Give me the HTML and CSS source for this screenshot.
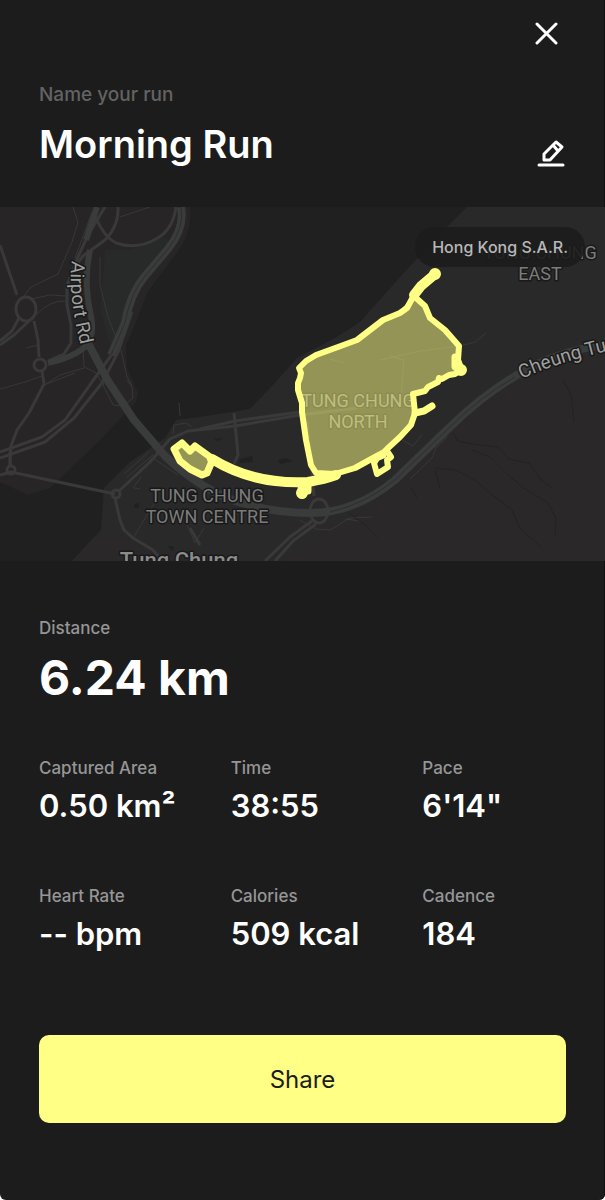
FILE: index.html
```html
<!DOCTYPE html>
<html lang="en">
<head>
    <meta charset="UTF-8">
    <meta name="viewport" content="width=device-width, initial-scale=1.0">
    <title>Morning Run</title>
    <link rel="stylesheet" href="styles.css">
</head>
<body>
    <main class="run">
        <header class="header">
            <button class="icon-button close" type="button" aria-label="Close">
                <svg width="24" height="24" viewBox="0 0 24 24"><path d="M2 2L21 21M21 2L2 21"/></svg>
            </button>
            <label class="name-label" for="runName">Name your run</label>
            <div class="name-row">
                <input class="name" type="text" id="runName" value="Morning Run">
                <button class="icon-button edit" type="button" aria-label="Edit name">
                    <svg width="28" height="28" viewBox="0 0 28 28"><path d="M2 26H26M7 21V15L19 3L25 8L13 21ZM16 6L21 12"/></svg>
                </button>
            </div>
        </header>

        <section class="map">
            <svg class="map-view" viewBox="0 207 605 354" preserveAspectRatio="xMidYMid slice" role="img" aria-label="Route map">
                <rect class="water" x="0" y="207" width="605" height="354"/>
                <!-- land -->
                <path class="shore" d="M0 207H190Q193 232 176 254L148 291L137 320L126 345L127 368L138 393L136 402L100 440L67 472L50 488L28 495L0 482Z"/>
                <path class="land" d="M467 207L448 226L400 277L360 322L335 338L297 358L273 385L250 409L200 417L176 420L165 438L130 462L104 488L101 530L72 561H605V207Z"/>
                <path class="hill" d="M605 355L545 371L500 390L450 431L405 478L350 520L320 535L280 561H605ZM72 561L94 537L112 530L135 542L155 561Z"/>
                <path class="park" d="M105 250L130 250L165 237L172 245L137 290L124 330L112 352L100 310Z"/>
                <path class="spot" d="M278 460L286 458L293 461L280 464ZM240 459L252 456L253 462L239 463ZM214 439L223 438L218 441ZM134 504L139 503L139 508L134 508ZM167 546L174 546L173 551Z"/>
                <!-- paths -->
                <g class="lane">
                    <path d="M73 207L78 222L72 242L58 274L31 287L24 296"/>
                    <path d="M31 299L50 295L66 296M36 315Q50 300 66 301"/>
                    <path d="M100 257V285L108 317L121 350L127 377L132 386"/>
                    <path d="M120 217L150 207M83 347L84 367L95 372L104 385M84 368L60 375L46 384M26 348L38 345"/>
                    <path d="M92 212L75 258M44 385L75 373M0 389L25 382L42 376"/>
                    <path d="M102 383L113 405L123 406L133 398L132 387L127 380"/>
                    <path d="M179 403L180 416M173 434L174 425L186 423L192 427M133 488L141 477M124 474L149 452M126 478L153 455M134 488L140 489M133 538L155 502"/>
                    <path d="M380 360L420 351L460 346L475 342L486 333M401 400L404 358M330 359L345 363M390 355L402 360"/>
                    <path d="M449 428L446 438L436 448L432 458L410 479M402 440L413 446L422 435"/>
                    <path d="M154 459L178 475M187 525L195 543L204 528M300 520L316 529L330 530L350 518L372 517M345 519L360 521"/>
                </g>
                <g class="trail">
                    <path d="M453 433L458 441L472 444L498 447L508 459L529 463L540 479L552 488"/>
                    <path d="M472 450L490 457L510 477L525 489L547 502L556 518L555 536M435 468L455 470L475 480L490 493L512 510L520 529L541 547"/>
                    <path d="M563 380L571 395L574 422M411 487L417 498M435 470L440 488M345 510L365 525L378 538"/>
                </g>
                <!-- roads -->
                <g class="road">
                    <path d="M0 245L17 295"/>
                    <ellipse cx="26" cy="309" rx="10" ry="12"/>
                    <path d="M19 318L12 331L0 341M30 320L14 335L0 345M34 321L38 340L39 357"/>
                    <circle cx="40" cy="365" r="6"/>
                    <path d="M42 371L44 384L29 413L17 430L11 446L10 465"/>
                    <path d="M105 207L88 235L77 259L67 286L67 305L71 325L71 343L64 354L48 361"/>
                    <path d="M96 218Q104 237 116 243Q137 250 156 239Q173 230 176 207"/>
                    <path d="M118 207Q119 226 105 240L83 256L77 264"/>
                    <path d="M128 310L115 350L92 382L65 420L42 437L0 452M132 312L118 352L102 383L74 418L45 442L0 458"/>
                    <path d="M10 452V466"/>
                    <circle cx="11" cy="470" r="4"/>
                    <path d="M0 475L11 472L115 494"/>
                    <circle cx="116" cy="494" r="4"/>
                    <path d="M119 491L150 462L170 439L188 431L235 426L300 415L350 409L415 398"/>
                    <path d="M115 498L120 520L124 530L133 538L153 550L162 561"/>
                    <path d="M307 421L314 496"/>
                    <path d="M200 429L235 421L300 412M234 413L238 455L234 464"/>
                    <ellipse cx="319" cy="511" rx="9" ry="12"/>
                    <path d="M312 521L290 537L265 561M316 524L293 541L275 561"/>
                    <path d="M190 528L200 545"/>
                </g>
                <g class="highway">
                    <path d="M97 207L86 240M90 250Q83 281 91 316Q95 336 85 347Q72 358 48 363"/>
                    <path class="coast" d="M181 207Q185 228 168 249L145 276Q130 294 125 323L111 355"/>
                    <path class="main" d="M88 343L108 381L134 420L165 456Q189 479 218 494Q260 513 310 513Q355 513 395 480L450 427Q490 388 535 365Q570 349 605 345"/>
                    <path class="divider" d="M181 207Q185 228 168 249L145 276Q130 294 125 323L111 355M330 512Q365 504 395 480L450 427Q480 397 515 377"/>
                </g>
                <!-- place names -->
                <g class="place">
                    <text x="540" y="259">TUNG CHUNG</text>
                    <text x="540" y="280">EAST</text>
                    <text x="358" y="407">TUNG CHUNG</text>
                    <text x="358" y="428">NORTH</text>
                    <text x="207" y="502">TUNG CHUNG</text>
                    <text x="207" y="523">TOWN CENTRE</text>
                </g>
                <path id="airportRoad" class="guide" d="M72 261Q67 295 82 350"/>
                <path id="cheungTung" class="guide" d="M522 379Q560 360 640 344"/>
                <text class="street"><textPath href="#airportRoad">Airport Rd</textPath></text>
                <text class="street"><textPath href="#cheungTung">Cheung Tung Rd</textPath></text>
                <text class="town" x="179" y="568">Tung Chung</text>
                <!-- captured area and route -->
                <path class="area" d="M413 297L400 310L383 319L357 340L316 355L306 361L299 368L301 375L297 384L302 399L302 412L306 440L311 465L316 473L345 472L375 457L392 445L411 425L415 413L413 394L450 374L463 369L458 345L430 316Z"/>
                <path class="area" d="M174 449L182 443L190 451L195 446L213 459L207 473L202 475L190 469L180 461Z"/>
                <g class="route">
                    <path d="M413 297L407 308L400 313L383 320L357 340L338 347L316 355L306 361L299 368L301 373L300 378L298 383L298 390L302 403L302 412L306 440L311 465L316 473L335 474L355 468L375 457L384 452L387 449L400 437L411 425L415 413L413 394L425 391L428 387L438 382L439 378L442 379L449 375L455 374L462 370L458 360L459 346L445 330L430 318L425 306L415 297"/>
                    <path class="block" d="M415 413L424 411L432 406"/>
                    <path class="block" d="M174 449L182 443L190 451L195 446L213 459L207 473L202 475L190 469L180 461Z"/>
                    <path class="block" d="M374 459L383 455"/>
                    <path d="M376 460L374 463L377 474L388 467L387 460L391 457L387 451"/>
                    <path class="block" d="M455 357L455 367L461 370M308 483L308 491"/>
                    <path class="end" d="M302 493V493M435 274V274M461 370V370"/>
                    <path class="wide" d="M414 295L421 286L434 275M302 494L303 486"/>
                    <path class="wide" d="M212 459Q254 485 308 482Q325 479 336 475"/>
                </g>
            </svg>
            <span class="region">Hong Kong S.A.R.</span>
        </section>

        <section class="stats">
            <dl class="distance">
                <dt>Distance</dt>
                <dd>6.24 km</dd>
            </dl>
            <dl class="grid">
                <div><dt>Captured Area</dt><dd>0.50 km²</dd></div>
                <div><dt>Time</dt><dd>38:55</dd></div>
                <div><dt>Pace</dt><dd>6'14"</dd></div>
                <div><dt>Heart Rate</dt><dd>-- bpm</dd></div>
                <div><dt>Calories</dt><dd>509 kcal</dd></div>
                <div><dt>Cadence</dt><dd>184</dd></div>
            </dl>
            <button class="share" type="button">Share</button>
        </section>
    </main>
</body>
</html>
```
FILE: styles.css
```css
* {
    box-sizing: border-box;
}

body {
    margin: 0;
    background-color: #fff;
    font-family: Inter, "Liberation Sans", sans-serif;
    color: #fff;
}

.run {
    display: flex;
    flex-direction: column;
    min-height: 100vh;
    background-color: #1c1c1c;
    box-shadow: inset -1px 0 #101010;
    border-radius: 0 0 6px 6px;
}

/* header */
.header {
    display: flex;
    flex-direction: column;
    padding: 16px 40px 36px 39px;
}

.icon-button {
    display: flex;
    padding: 6px;
    border: none;
    background: none;
    cursor: pointer;
}

.icon-button path {
    fill: none;
    stroke: #fff;
    stroke-width: 3;
    stroke-linecap: round;
    stroke-linejoin: round;
}

.close {
    align-self: flex-end;
}

.name-label {
    margin-top: 31px;
    font-size: 19px;
    font-weight: 500;
    line-height: 24px;
    color: #636363;
}

.name-row {
    display: flex;
    align-items: flex-end;
    margin-top: 12px;
}

.name {
    flex: 1;
    min-width: 0;
    height: 52px;
    padding: 0 0 2px;
    border: none;
    outline: none;
    background: none;
    font-family: inherit;
    font-size: 38px;
    font-weight: 600;
    color: #fff;
}

.edit {
    margin-right: -6px;
    padding-bottom: 4px;
}

/* map */
.map {
    position: relative;
    overflow: hidden;
}

.map-view {
    display: block;
    width: 100%;
    height: auto;
}

.region {
    position: absolute;
    top: 20px;
    right: 20px;
    padding: 0 17px;
    border-radius: 20px;
    background-color: rgba(28, 28, 28, 0.9);
    font-size: 16px;
    font-weight: 500;
    line-height: 40px;
    color: #b8b8b8;
}

.water {
    fill: #202020;
}

.shore {
    fill: #272526;
}

.land {
    fill: #292929;
}

.hill {
    fill: #2a2829;
}

.park {
    fill: #282929;
}

.spot {
    fill: #202121;
}

.lane, .trail, .road, .highway, .guide {
    fill: none;
    stroke-linejoin: round;
}

.lane {
    stroke: #383838;
    stroke-width: 1;
}

.trail {
    stroke: #232323;
    stroke-width: 1;
}

.road {
    stroke: #393939;
    stroke-width: 3;
}

.highway {
    stroke: #3a3b3b;
    stroke-width: 6;
}

.highway .coast {
    stroke-width: 8;
}

.highway .main {
    stroke-width: 8;
}

.highway .divider {
    stroke: #2c2d2d;
    stroke-width: 1;
}

.place, .street, .town {
    font-family: Roboto, sans-serif;
    font-size: 18px;
    fill: #7c7c7c;
    stroke: #191919;
    stroke-width: 3;
    stroke-linejoin: round;
    paint-order: stroke;
}

.place, .town {
    text-anchor: middle;
}

.street {
    font-size: 19px;
    fill: #a0a0a0;
}

.town {
    font-size: 22px;
    font-weight: 500;
    fill: #8c8c8c;
}

.area {
    fill: rgba(255, 255, 133, 0.5);
}

.route {
    fill: none;
    stroke: #ffff85;
    stroke-width: 6;
    stroke-linecap: round;
    stroke-linejoin: round;
}

.route .block {
    stroke-width: 7;
}

.route .wide {
    stroke-width: 10;
}

.route .end {
    stroke-width: 12;
}

/* stats */
.stats {
    display: flex;
    flex-direction: column;
    padding: 55px 39px 76px;
}

dl, dd {
    margin: 0;
}

dt {
    font-size: 17px;
    font-weight: 500;
    line-height: 24px;
    color: #969696;
}

dd {
    margin-top: 6px;
    font-size: 31px;
    font-weight: 600;
    line-height: 40px;
}

.distance dd {
    margin-top: 8px;
    font-size: 48px;
    font-weight: 700;
    line-height: 60px;
}

.grid {
    display: grid;
    grid-template-columns: repeat(3, 1fr);
    column-gap: 48px;
    row-gap: 58px;
    margin-top: 48px;
}

.grid div {
    white-space: nowrap;
}

.share {
    margin-top: 81px;
    height: 88px;
    border: none;
    border-radius: 10px;
    background-color: #ffff85;
    font-family: inherit;
    font-size: 24px;
    font-weight: 400;
    color: #1c1c1c;
    cursor: pointer;
}
```
